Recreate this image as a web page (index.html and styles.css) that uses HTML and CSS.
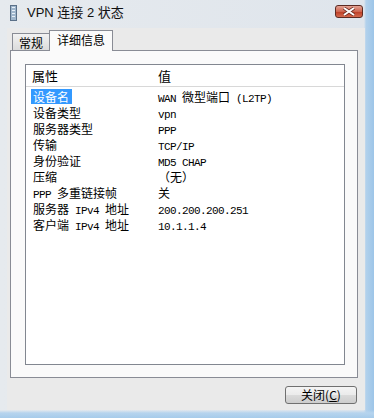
FILE: index.html
```html
<!DOCTYPE html>
<html>
<head>
    <meta charset='utf-8'>
    <title>VPN 连接 2 状态</title>
    <link rel="stylesheet" href="styles.css">
</head>
<body>
    <div class="window">
        <div class="titlebar">
            <svg class="appicon" width="7" height="16" viewBox="0 0 7 16">
                <rect x="0.5" y="0.5" width="6" height="15" fill="#9fb6cc" stroke="#5a7088"/>
                <rect x="2" y="2" width="3" height="1" fill="#e8f0f8"/>
                <rect x="2" y="5" width="3" height="1" fill="#e8f0f8"/>
                <rect x="2" y="8" width="3" height="1" fill="#e8f0f8"/>
                <rect x="2" y="11" width="3" height="1" fill="#e8f0f8"/>
            </svg>
            <span class="title">VPN 连接 2 状态</span>
            <div class="closebox">
                <svg width="14" height="9" viewBox="0 0 14 9">
                    <path d="M2 1 L12 8 M12 1 L2 8" stroke="#6a2a20" stroke-width="3.4"/>
                    <path d="M2 1 L12 8 M12 1 L2 8" stroke="#ffffff" stroke-width="2"/>
                </svg>
            </div>
        </div>

        <div class="client">
            <div class="tabs">
                <div class="tab">常规</div>
                <div class="tab active">详细信息</div>
            </div>
            <div class="panel">
                <div class="list">
                    <div class="head">
                        <div class="hc1">属性</div>
                        <div class="hc2">值</div>
                    </div>
                    <div class="rows">
                        <div class="row"><div class="k"><span class="sel">设备名</span></div><div class="v"><span class="en">WAN </span>微型端口<span class="en"> (L2TP)</span></div></div>
                        <div class="row"><div class="k"><span>设备类型</span></div><div class="v"><span class="en">vpn</span></div></div>
                        <div class="row"><div class="k"><span>服务器类型</span></div><div class="v"><span class="en">PPP</span></div></div>
                        <div class="row"><div class="k"><span>传输</span></div><div class="v"><span class="en">TCP/IP</span></div></div>
                        <div class="row"><div class="k"><span>身份验证</span></div><div class="v"><span class="en">MD5 CHAP</span></div></div>
                        <div class="row"><div class="k"><span>压缩</span></div><div class="v">（无）</div></div>
                        <div class="row"><div class="k"><span><span class="en">PPP </span>多重链接帧</span></div><div class="v">关</div></div>
                        <div class="row"><div class="k"><span>服务器<span class="en"> IPv4 </span>地址</span></div><div class="v"><span class="en">200.200.200.251</span></div></div>
                        <div class="row"><div class="k"><span>客户端<span class="en"> IPv4 </span>地址</span></div><div class="v"><span class="en">10.1.1.4</span></div></div>
                    </div>
                </div>
            </div>
            <div class="buttons">
                <button class="btn">关闭(<u>C</u>)</button>
            </div>
        </div>
    </div>
</body>
</html>
```

FILE: styles.css
```css
/* Page */
body {
    margin: 0;
    font-family: "Noto Sans CJK SC", "Liberation Sans", sans-serif;
    color: #000;
}

/* Window frame */
.window {
    width: 374px;
    height: 418px;
    box-sizing: border-box;
    padding-bottom: 8px;
    background:
        linear-gradient(to bottom, rgba(0,0,0,0) 410px, #b6d4ee 413px, #a6cbea 418px),
        linear-gradient(to right, #e6eaee 0, #dfe5ec 364px, #b2d1ec 366px, #9dc5e8 374px);
}

.titlebar {
    height: 28px;
    display: flex;
    align-items: flex-start;
    padding-top: 5px;
    box-sizing: border-box;
}

.appicon {
    margin-left: 10px;
    flex: none;
}

.title {
    margin-left: 10px;
    font-family: "Liberation Sans", "Noto Sans CJK SC", sans-serif;
    font-size: 13px;
    line-height: 16px;
    color: #111;
}

.closebox {
    margin-left: auto;
    margin-right: 11px;
    width: 28px;
    height: 13px;
    box-sizing: border-box;
    border: 1px solid #5c2a22;
    border-radius: 3px;
    background: linear-gradient(#e3a294, #cf6650 50%, #bb3a22 51%, #d46a4e);
    display: flex;
    align-items: center;
    justify-content: center;
}

/* Client area */
.client {
    margin: 0 9px 0 7px;
    height: 382px;
    background: #eaeaea;
    padding: 2px 7px 0 3px;
    box-sizing: border-box;
}

.tabs {
    display: flex;
    align-items: flex-end;
    height: 20px;
    padding-left: 2px;
}

.tab {
    height: 17px;
    box-sizing: border-box;
    padding: 0 6px;
    border: 1px solid #898c95;
    border-bottom: none;
    background: linear-gradient(#f2f2f2, #dcdcdc);
    font-size: 12px;
    line-height: 17px;
}

.tab.active {
    height: 21px;
    margin-bottom: -1px;
    margin-left: -1px;
    padding: 0 7px;
    background: #fafafa;
    line-height: 18px;
    position: relative;
    z-index: 1;
}

.panel {
    height: 328px;
    box-sizing: border-box;
    border: 1px solid #898c95;
    background: #fafafa;
    padding: 13px 0 0 14px;
}

/* List view */
.list {
    width: 320px;
    height: 301px;
    box-sizing: border-box;
    border: 1px solid #828790;
    background: #fff;
}

.head {
    display: flex;
    height: 22px;
    box-sizing: border-box;
    border-bottom: 1px solid #d8d8d8;
    font-size: 13px;
    line-height: 21px;
}

.hc1 {
    width: 132px;
    padding-left: 6px;
    box-sizing: border-box;
}

.rows {
    padding-top: 2px;
}

.row {
    display: flex;
    height: 16px;
    font-size: 12px;
    line-height: 16px;
}

.k {
    width: 132px;
    padding-left: 5px;
    box-sizing: border-box;
    white-space: pre;
}

.k > span {
    display: inline-block;
    padding: 0 3px 0 2px;
}

.k .sel {
    background: #3399ff;
    color: #fff;
    height: 15px;
    line-height: 15px;
}

.v {
    white-space: pre;
}

.en {
    font-family: "Liberation Mono", monospace;
    font-size: 11px;
    letter-spacing: -0.6px;
}

/* Button */
.buttons {
    display: flex;
    justify-content: flex-end;
    margin-top: 8px;
    padding-right: 1px;
}

.btn {
    width: 72px;
    height: 18px;
    padding: 0;
    border: 1px solid #707070;
    border-radius: 3px;
    background: linear-gradient(#f4f4f4, #ebebeb 48%, #dadada 52%, #cdcdcd);
    font-family: "Noto Sans CJK SC", sans-serif;
    font-size: 12px;
    line-height: 16px;
    color: #000;
}
```
